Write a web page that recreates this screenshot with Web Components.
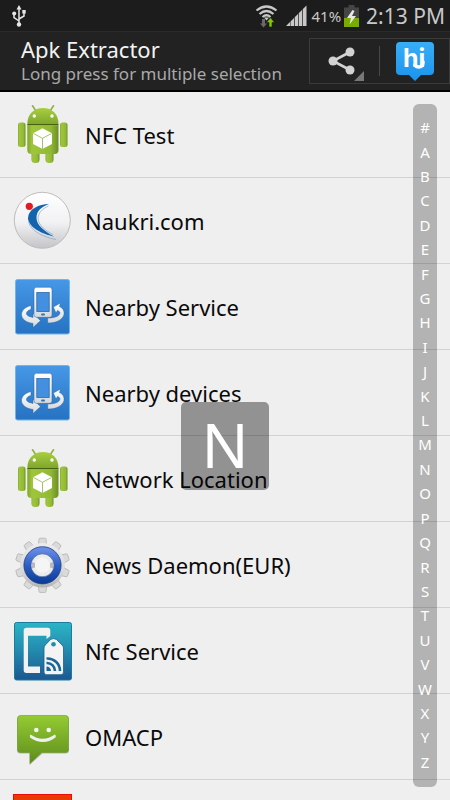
<!DOCTYPE html>
<html lang="en">

<head>
    <meta name="viewport" content="width=device-width, initial-scale=1" />
    <meta charset="utf-8" />
    <title>Apk Extractor</title>
    <style>
        html,
        body {
            height: 100%;
            margin: 0;
        }

        body {
            background: #efefef;
            font-family: "Noto Sans", "Open Sans", sans-serif;
        }
    </style>
</head>

<body>
    <apk-app>
        <status-bar slot="status" battery="41%" time="2:13 PM"></status-bar>
        <action-bar slot="header">
            <span slot="title">Apk Extractor</span>
            <span slot="subtitle">Long press for multiple selection</span>
        </action-bar>
        <app-row icon="android">NFC Test</app-row>
        <app-row icon="naukri">Naukri.com</app-row>
        <app-row icon="nearby">Nearby Service</app-row>
        <app-row icon="nearby">Nearby devices</app-row>
        <app-row icon="android">Network Location</app-row>
        <app-row icon="gear">News Daemon(EUR)</app-row>
        <app-row icon="nfc">Nfc Service</app-row>
        <app-row icon="message">OMACP</app-row>
        <app-row icon="office"></app-row>
        <letter-toast slot="overlay">N</letter-toast>
        <alpha-index slot="overlay"></alpha-index>
    </apk-app>

    <script>
        const define = (name, html, setup) => {
            customElements.define(name, class extends HTMLElement {
                constructor() {
                    super()
                    const shadow = this.attachShadow({ mode: 'open' })
                    const template = document.createElement('template')
                    template.innerHTML = html
                    shadow.appendChild(template.content.cloneNode(true))
                    this.$ = shadow.querySelector.bind(shadow)
                }
                connectedCallback() {
                    if (setup) setup(this)
                }
            })
        }

        // 10 teeth, drawn around the middle of the gear
        const teeth = [0, 36, 72, 108, 144, 180, 216, 252, 288, 324]
            .map(a => `<path d="M24 12 26.5 8.500 27 4Q27.200 3.200 28 3.200H33Q33.800 3.200 34 4L34.500 8.500 37 12Z" transform="rotate(${a} 30.5 30.3)"/>`)
            .join('')

        const icons = {
            android: `
                <defs>
                    <linearGradient id="g" x2="0" y2="1"><stop stop-color="#a9cf3f"/><stop offset="1" stop-color="#7fa72c"/></linearGradient>
                    <linearGradient id="b"><stop stop-color="#7fa52b"/><stop offset=".15" stop-color="#9fc63b"/><stop offset=".75" stop-color="#92b934"/><stop offset="1" stop-color="#6c8f24"/></linearGradient>
                </defs>
                <path d="M20.500 .8 24 6M41.500 .8 38 6" stroke="#8db334" stroke-width="1.600" stroke-linecap="round"/>
                <rect x="19.500" y="42" width="8" height="16" rx="3.500" fill="url(#b)"/>
                <rect x="33.500" y="42" width="8" height="16" rx="3.500" fill="url(#b)"/>
                <rect x="6" y="17.500" width="7.500" height="24.500" rx="2.500" fill="url(#b)"/>
                <rect x="48" y="17.500" width="7.500" height="24.500" rx="2.500" fill="url(#b)"/>
                <path d="M15.300 19C15.300 9 22 3 31 3S46.500 9 46.500 19Z" fill="url(#g)"/>
                <path d="M15.300 19H46.500V20.500H15.300Z" fill="#46600f"/>
                <path d="M15.300 20.500H46.500V45Q46.500 49 42.500 49H19.300Q15.300 49 15.300 45Z" fill="url(#b)"/>
                <circle cx="22.300" cy="11" r="1.700" fill="#fff"/><circle cx="40" cy="11" r="1.700" fill="#fff"/>
                <path d="M30.500 23.300 40 28.300V39L30.500 44 21 39V28.300Z" fill="#fff"/>
                <path d="M21.500 28.500 30.500 33.300 39.500 28.500M30.500 33.300V44" fill="none" stroke="#9abc58" stroke-width=".9"/>`,
            naukri: `
                <defs><linearGradient id="g" x2="0" y2="1"><stop stop-color="#fff"/><stop offset=".55" stop-color="#f1f1f3"/><stop offset="1" stop-color="#c4c4c8"/></linearGradient></defs>
                <circle cx="30.300" cy="29.300" r="28" fill="url(#g)" stroke="#bdbdbd"/>
                <circle cx="17.300" cy="15.300" r="3.600" fill="#e31b23"/>
                <path d="M37 13C27 13 16.500 18 16 27C16 36 30 43 42 45.500C32 40 24.500 34 24.500 27C24.500 20 29 16 37 13Z" fill="#1464ad"/>
                <path d="M36.500 15C30 18 26 22 26 28C27 35 34 40 41 43.500M16.500 31C19 40 31 46 44 48.500" fill="none" stroke="#6a9dca" stroke-width=".6"/>`,
            nearby: `
                <defs>
                    <linearGradient id="g" x2="0" y2="1"><stop stop-color="#4698e6"/><stop offset="1" stop-color="#2672c3"/></linearGradient>
                    <linearGradient id="w" x2="0" y2="1"><stop stop-color="#fff"/><stop offset="1" stop-color="#d6d9dc"/></linearGradient>
                </defs>
                <rect x="3.500" y="2.500" width="54" height="54.500" rx="2" fill="url(#g)" stroke="#6fb6ea"/>
                <path d="M19 28.500C12 30.500 9.500 34 9.500 37.500C9.500 42 14 45.500 21 46.500V50.500L28.500 43.700 21 36.300V40.500C16.500 39.500 14 38 14.500 36C15 34 16.500 33 19 32.500Z" fill="url(#w)" stroke="#2b67a8" stroke-width=".5"/>
                <path d="M35.700 41C43 41 47.500 39 48 36C48 35 47 34 45.500 33.500L44 36 41.300 30 48.500 26 47.500 29.500C51 31 52.500 34 52 37.500C51 42.500 44 46.500 35.700 46Z" fill="url(#w)" stroke="#2b67a8" stroke-width=".5"/>
                <rect x="22" y="10.300" width="18" height="30" rx="2.500" fill="url(#w)" stroke="#2b67a8" stroke-width=".5"/>
                <rect x="24.800" y="15.500" width="12.400" height="19" fill="#4290df" stroke="#2d6cab" stroke-width=".8"/>
                <rect x="29" y="36.500" width="4" height="2" rx="1" fill="#3873b0"/>`,
            gear: `
                <defs>
                    <linearGradient id="g" x2="0" y2="1"><stop stop-color="#6f93ea"/><stop offset=".5" stop-color="#2d5fc4"/><stop offset="1" stop-color="#0a3a92"/></linearGradient>
                    <linearGradient id="w" x1="0" y1="3" x2="0" y2="57" gradientUnits="userSpaceOnUse"><stop stop-color="#f0f0f0"/><stop offset=".6" stop-color="#dadada"/><stop offset="1" stop-color="#a8a8a8"/></linearGradient>
                </defs>
                <g fill="#dadada" stroke="#b4b4b4" stroke-width=".8">${teeth}</g>
                <circle cx="30.500" cy="30.300" r="22.300" fill="url(#w)"/>
                <circle cx="30.500" cy="30.300" r="18.600" fill="url(#g)" stroke="#1c3f83" stroke-width=".8"/>
                <circle cx="30.500" cy="30.300" r="11.500" fill="#ececec" stroke="#2b4f95" stroke-width=".6"/>
                <path d="M19.800 27 23 28V32.500L19.800 33.500ZM41.200 27 38 28V32.500L41.200 33.500Z" fill="#b6b9be"/>
                <circle cx="30.500" cy="30.300" r="7.500" fill="#f5f5f5"/>`,
            nfc: `
                <defs><linearGradient id="g" x2="0" y2="1"><stop stop-color="#2bb5c6"/><stop offset=".5" stop-color="#2389ad"/><stop offset="1" stop-color="#1b5791"/></linearGradient></defs>
                <rect x="2.500" y="1.500" width="57" height="57.500" rx="2" fill="url(#g)" stroke="#1b7c9c"/>
                <path d="M14.500 6.800H35.500Q38.300 6.800 38.300 9.500V15L34.500 18V14.700H16V45.500H28V52H14.500Q11.700 52 11.700 49.300V9.500Q11.700 6.800 14.500 6.800Z" fill="#f2f2f2"/>
                <path d="M38.500 18.500Q41.500 16.500 44.500 18.500L50 24Q51.500 25.500 51.500 27V51Q51.500 53.700 49 53.700H34.500Q32 53.700 32 51V27Q32 25.500 33.300 24Z" fill="#f4f4f4" stroke="#1e5e85" stroke-width=".8"/>
                <circle cx="41.500" cy="23.300" r="2.300" fill="#2389ad"/>
                <path d="M34.500 37.500A12.500 12.500 0 0 1 48 50M34.500 42A8 8 0 0 1 43 50" fill="none" stroke="#1c6597" stroke-width="2.600"/>
                <path d="M34.500 45.500A4.500 4.500 0 0 1 39 50H34.500Z" fill="#1c6597"/>`,
            message: `
                <defs><linearGradient id="g" x2="0" y2="1"><stop stop-color="#94cb32"/><stop offset=".75" stop-color="#6c9c22"/><stop offset="1" stop-color="#5d861e"/></linearGradient></defs>
                <path d="M8.500 9.500H53.500Q57 9.500 57 13V43Q57 46.500 53.500 46.500H30.500L17.500 58V46.500H8.500Q5 46.500 5 43V13Q5 9.500 8.500 9.500Z" fill="#777" opacity=".5"/>
                <path d="M8.500 8.500H53.500Q56.500 8.500 56.500 11.500V42.500Q56.500 45.500 53.500 45.500H29.700L18 56.500V45.500H8.500Q5.500 45.500 5.500 42.500V11.500Q5.500 8.500 8.500 8.500Z" fill="url(#g)" stroke="#6f9a2a" stroke-width=".6"/>
                <circle cx="24.300" cy="23" r="2.300" fill="#f4f4f4"/><circle cx="36.700" cy="23" r="2.300" fill="#f4f4f4"/>
                <path d="M18.500 27.500Q30.500 36 43 27.500Q44.500 29 43.500 30.500Q31 39.500 18 30.500Q17.500 28.500 18.500 27.500Z" fill="#efefef"/>`,
            office: `
                <rect x="1" y="1" width="59" height="59" fill="#e90d06"/>
                <rect x="2" y="2" width="57" height="57" fill="#e93a04"/>`
        }

        define('apk-app', `
            <style>
                :host { display: flex; flex-direction: column; height: 100%; overflow: hidden; }
                main { position: relative; flex: 1; min-height: 0; overflow: hidden; }
            </style>
            <slot name="status"></slot>
            <slot name="header"></slot>
            <main>
                <div role="list"><slot></slot></div>
                <slot name="overlay"></slot>
            </main>`)

        define('status-bar', `
            <style>
                :host { display: flex; align-items: center; height: 31px; padding: 0 5px 0 12px; background: #1c1c1c; border-bottom: 1px solid #2b2b2b; color: #c8c8c8; }
                svg { display: block; flex: none; }
                .usb { margin-right: auto; }
                .wifi { margin-right: 8px; }
                .level { font-size: 15px; margin: 0 3px 0 4px; }
                .time { font-size: 21px; line-height: 30px; margin-left: 7px; }
            </style>
            <svg class="usb" width="14" height="22" viewBox="0 0 14 22" fill="#e6e6e6">
                <path d="M7 19V3M7 16 2 12.500V9M7 14 12 11V7.500" fill="none" stroke="#e6e6e6" stroke-width="1.500"/>
                <path d="M7 0 9.500 4.500H4.500ZM10.300 5H13.700V8.500H10.300Z"/><circle cx="2.200" cy="8.500" r="2"/><circle cx="7" cy="19.500" r="2.200"/>
            </svg>
            <svg class="wifi" width="23" height="24" viewBox="0 0 23 24">
                <path d="M1.500 6.500Q11.500-1.500 21.500 6.500M4.500 10Q11.500 4 18.500 10M7.500 13Q11.500 9.500 15.500 13" fill="none" stroke="#c8c8c8" stroke-width="2.200"/>
                <path d="M9 13.500H14L11.500 16.500Z" fill="#c8c8c8"/>
                <path d="M7 15H10V19.500H12L8.500 23.500 5 19.500H7Z" fill="#686868"/>
                <path d="M14 23V18.500H11.500L15.500 13.500 19.500 18.500H17V23Z" fill="#86c800" stroke="#1c1c1c" stroke-width=".6"/>
            </svg>
            <svg width="21" height="22" viewBox="0 0 21 22" fill="#c8c8c8">
                <path d="M0 21 4 17V21ZM4.500 16.500 8 13V21H4.500ZM8.700 12.300 12 9V21H8.700ZM12.700 8.300 16 5V21H12.700ZM16.700 4.300 20.500 .5V21H16.700Z"/>
            </svg>
            <span class="level"></span>
            <svg width="15" height="22" viewBox="0 0 15 22">
                <path d="M4.500 0H10.500V2.500H15V22H0V2.500H4.500Z" fill="#454545"/>
                <path d="M0 13H15V22H0Z" fill="#78ad00"/>
                <path d="M8.500 5 3 13H7L5.500 19.500 12 11H8L10.500 6Z" fill="#e8e8e8"/>
            </svg>
            <span class="time"></span>`,
            (el) => {
                el.$('.level').textContent = el.getAttribute('battery')
                el.$('.time').textContent = el.getAttribute('time')
            })

        define('action-bar', `
            <style>
                :host { display: flex; align-items: center; height: 58px; padding-left: 21px; background: #222; border-bottom: 2px solid #000; }
                .titles { flex: 1; min-width: 0; white-space: nowrap; }
                h1, p { margin: 0; font-weight: 400; }
                h1 { font-size: 22px; line-height: 26px; color: #f3f3f3; }
                p { font-size: 17px; line-height: 24px; color: #a9a9a9; }
                .actions { display: flex; align-items: center; box-sizing: border-box; height: 46px; border: 1px solid #3b3b3b; }
                button { display: flex; align-items: center; justify-content: center; width: 69px; height: 100%; padding: 0; border: 0; background: none; }
                hr { width: 1px; height: 30px; margin: 0; border: 0; background: #484848; }
                svg text { font: 700 25px Inter, "Noto Sans", sans-serif; }
            </style>
            <div class="titles">
                <h1><slot name="title"></slot></h1>
                <p><slot name="subtitle"></slot></p>
            </div>
            <div class="actions">
                <button aria-label="Share">
                    <svg width="69" height="44" viewBox="0 0 69 44" fill="#d2d2d2">
                        <path d="M40 13 23 22 40 31" fill="none" stroke="#d2d2d2" stroke-width="2.600"/>
                        <circle cx="23" cy="22" r="4.500"/><circle cx="40" cy="13" r="4.500"/><circle cx="40" cy="31" r="4.500"/>
                        <path d="M54 32V42H44Z" fill="#777"/>
                    </svg>
                </button>
                <hr />
                <button aria-label="Share with hike">
                    <svg width="38" height="40" viewBox="0 0 38 40">
                        <defs><linearGradient id="g" x2="0" y2="1"><stop stop-color="#38aef8"/><stop offset="1" stop-color="#1b93ea"/></linearGradient></defs>
                        <path d="M4 1H34Q38 1 38 5V30Q38 34 34 34H25L19 40 13 34H4Q0 34 0 30V5Q0 1 4 1Z" fill="url(#g)"/>
                        <text x="7" y="26" fill="#fff">hi</text>
                        <path d="M19 24Q20 26 23 26Q27 25.500 27 21" fill="none" stroke="#fff" stroke-width="3.600" stroke-linecap="round"/>
                    </svg>
                </button>
            </div>`)

        define('app-row', `
            <style>
                :host { display: flex; align-items: center; gap: 13px; box-sizing: border-box; height: 86px; padding: 0 12px; border-bottom: 1px solid #d2d2d2; color: #0a0a0a; font-size: 22px; }
                svg { display: block; flex: none; }
            </style>
            <svg width="60" height="60" viewBox="0 0 60 60" aria-hidden="true"></svg>
            <slot></slot>`,
            (el) => {
                el.setAttribute('role', 'listitem')
                el.$('svg').innerHTML = icons[el.getAttribute('icon')]
            })

        define('letter-toast', `
            <style>
                :host { position: absolute; inset: 0; display: grid; place-items: center; pointer-events: none; }
                div { width: 88px; height: 88px; border-radius: 5px; background: rgba(0, 0, 0, .39); color: #fff; font-size: 62px; line-height: 84px; text-align: center; }
            </style>
            <div><slot></slot></div>`)

        define('alpha-index', `
            <style>
                :host { position: absolute; top: 12px; right: 13px; bottom: 13px; width: 24px; }
                nav { display: flex; flex-direction: column; box-sizing: border-box; height: 100%; padding: 11px 0 13px; border-radius: 6px; background: rgba(0, 0, 0, .25); }
                a { flex: 1; display: flex; align-items: center; justify-content: center; min-height: 0; color: #fff; font-size: 15px; line-height: 20px; text-decoration: none; }
            </style>
            <nav aria-label="Index"></nav>`,
            (el) => {
                el.$('nav').innerHTML = [...'#ABCDEFGHIJKLMNOPQRSTUVWXYZ']
                    .map(c => `<a href="#${c}">${c}</a>`).join('')
            })
    </script>
</body>

</html>
